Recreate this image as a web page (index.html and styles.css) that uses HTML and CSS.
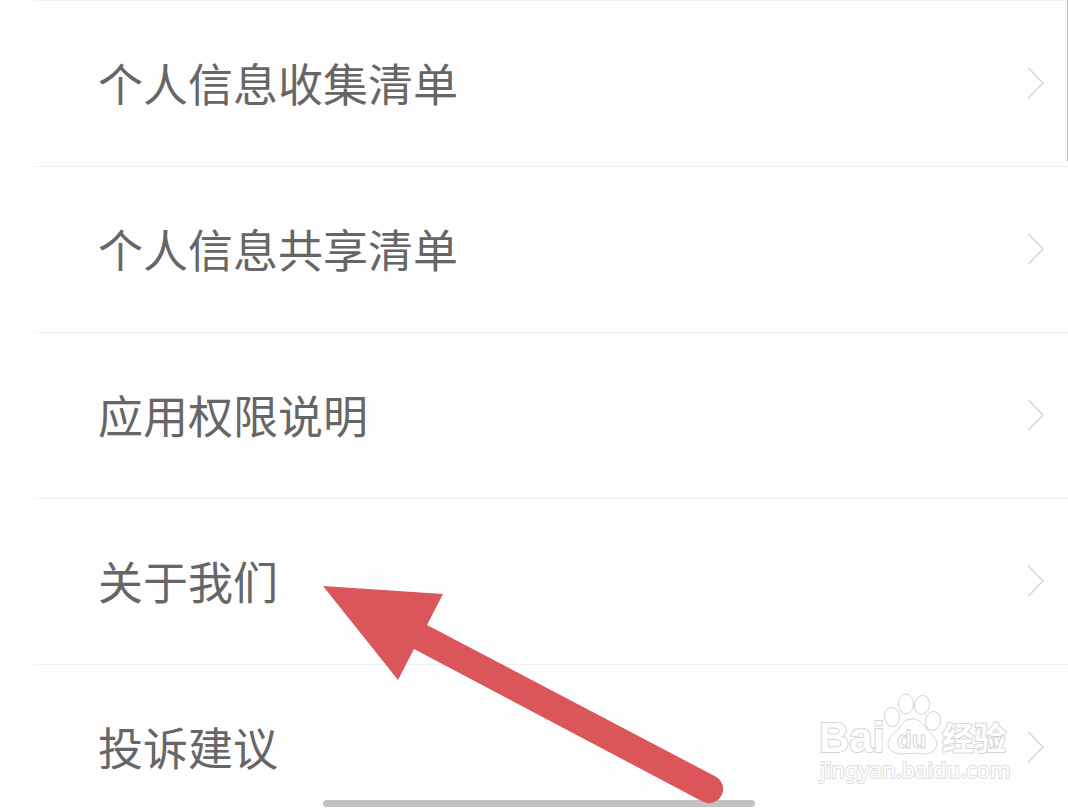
FILE: index.html
```html
<!DOCTYPE html>
<html lang="zh-CN">
  <head>
    <meta charset="UTF-8" />
    <meta name="viewport" content="width=device-width, initial-scale=1.0" />
    <title>设置</title>
    <link rel="stylesheet" href="styles.css" />
  </head>
  <body>
    <nav class="menu">
      <a class="row" href="#collect">
        <span class="label">个人信息收集清单</span>
        <svg class="chevron" viewBox="0 0 18 32"><path d="M1.5 1 16 16 1.5 31" /></svg>
      </a>
      <a class="row" href="#share">
        <span class="label">个人信息共享清单</span>
        <svg class="chevron" viewBox="0 0 18 32"><path d="M1.5 1 16 16 1.5 31" /></svg>
      </a>
      <a class="row" href="#permissions">
        <span class="label">应用权限说明</span>
        <svg class="chevron" viewBox="0 0 18 32"><path d="M1.5 1 16 16 1.5 31" /></svg>
      </a>
      <a class="row" href="#about">
        <span class="label">关于我们</span>
        <svg class="chevron" viewBox="0 0 18 32"><path d="M1.5 1 16 16 1.5 31" /></svg>
      </a>
      <a class="row" href="#feedback">
        <span class="label">投诉建议</span>
        <svg class="chevron" viewBox="0 0 18 32"><path d="M1.5 1 16 16 1.5 31" /></svg>
      </a>
    </nav>

    <div class="scrollbar"></div>
    <div class="home-bar"></div>

    <svg class="arrow" viewBox="0 0 400 218">
      <path d="M0 0 120 8 104 39 392.500 190.500A14 14 0 0 1 379.500 215.500L91 63 75 94Z" />
    </svg>

    <!-- watermark -->
    <svg class="watermark" viewBox="0 0 200 96">
      <text class="brand" x="1" y="61">Bai</text>
      <g class="paw">
        <ellipse cx="74" cy="26" rx="7.500" ry="9.500" transform="rotate(-8 74 26)" />
        <ellipse cx="88" cy="13" rx="7.500" ry="10" />
        <ellipse cx="104" cy="14" rx="7.500" ry="9.500" transform="rotate(12 104 14)" />
        <ellipse cx="115" cy="30" rx="7.500" ry="9.500" transform="rotate(12 115 30)" />
        <path d="M94 28C100 28 104 31 107 36C111 42 119 46 119 53C118 61 111 63 104 63C97 62 92 62 85 63C77 63 70 60 70 53C70 46 77 43 81 37C84 32 88 28 94 28Z" />
      </g>
      <text class="du" x="79" y="57">du</text>
      <text class="brand-cn" x="124" y="59">经验</text>
      <text class="site" x="2" y="87">jingyan.baidu.com</text>
    </svg>
  </body>
</html>
```
FILE: styles.css
```css
body {
  margin: 0;
  height: 100vh;
  overflow: hidden;
  position: relative;
  background-color: #fefefe;
  font-family: "Noto Sans CJK SC", sans-serif;
}

.menu {
  display: flex;
  flex-direction: column;
  padding-left: 34px;
}

.row {
  display: flex;
  align-items: center;
  justify-content: space-between;
  box-sizing: border-box;
  height: 166px;
  padding: 0 23px 2px 64px;
  border-top: 1px solid #f0f0f0;
  color: #666;
  text-decoration: none;
}

.label {
  font-size: 45px;
  line-height: 66px;
}

.chevron {
  width: 18px;
  height: 32px;
  fill: none;
  stroke: #d6d6d6;
  stroke-width: 1.5;
}

.scrollbar {
  position: absolute;
  top: 0;
  right: 0;
  width: 1px;
  height: 161px;
  background-color: #bbb;
}

.home-bar {
  position: absolute;
  left: 323px;
  bottom: 1px;
  width: 432px;
  height: 7px;
  border-radius: 4px;
  background-color: #c2c2c2;
}

.arrow {
  position: absolute;
  left: 323px;
  top: 586px;
  width: 400px;
  height: 218px;
  fill: #db565b;
}

.watermark {
  position: absolute;
  right: 50px;
  bottom: 21px;
  width: 200px;
  height: 96px;
  fill: #fefefe;
  stroke: #d6d6d6;
  stroke-width: 1;
}

.brand {
  font: bold 42px "Liberation Sans", sans-serif;
  paint-order: stroke;
  stroke-width: 2;
}

.du {
  font: bold 24px "Liberation Sans", sans-serif;
}

.brand-cn {
  font: bold 32px "Noto Sans CJK SC", sans-serif;
  paint-order: stroke;
  stroke-width: 2;
}

.site {
  font: 22px "Noto Sans", sans-serif;
  paint-order: stroke;
  stroke: #dedede;
  stroke-width: 2;
}
```
